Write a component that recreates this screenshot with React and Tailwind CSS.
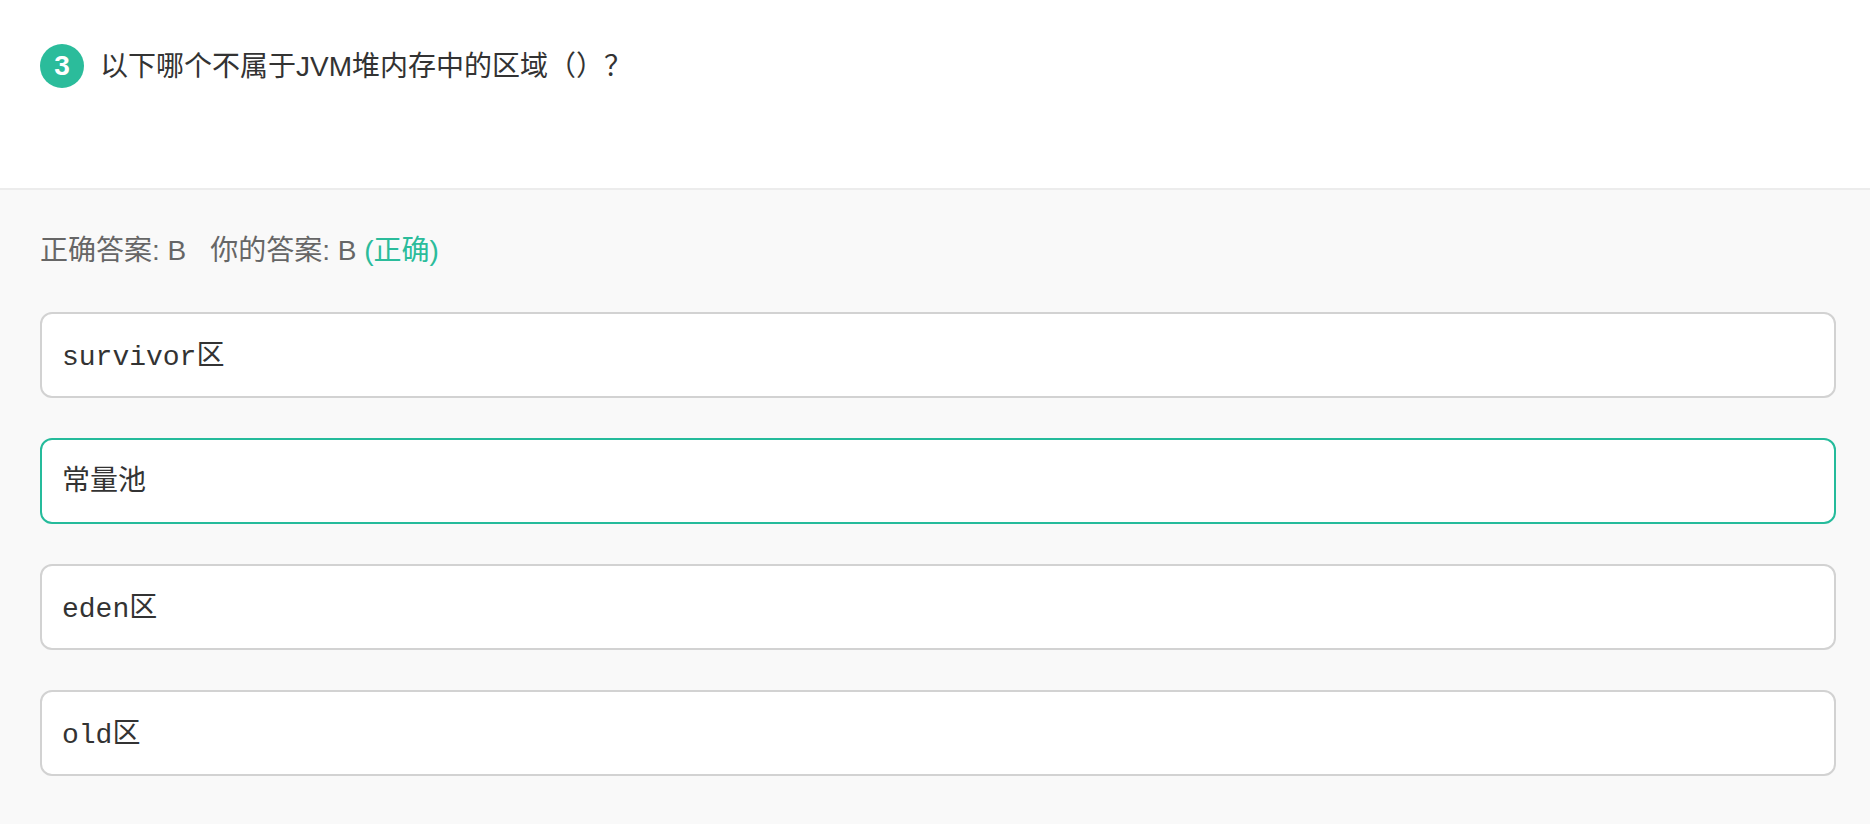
const sans = "font-['Liberation_Sans','Noto_Sans_CJK_SC',sans-serif]";

function Option({ children, mono, correct }) {
  return (
    <div
      className={`flex h-[86px] items-center rounded-xl border-2 bg-white pl-[20px] text-[28px] text-[#333] ${
        correct ? "border-[#25bb9b]" : "border-[#d2d2d2]"
      } ${mono ? "pt-[5px] font-['Liberation_Mono','Noto_Sans_CJK_SC',monospace]" : sans}`}
    >
      {children}
    </div>
  );
}

export default function App() {
  return (
    <div className={`flex h-[824px] flex-col bg-[#f9f9f9] ${sans}`}>
      <div className="flex h-[190px] items-start gap-[16px] border-b-2 border-[#ececec] bg-white pl-[40px] pt-[44px]">
        <div className="flex h-[44px] w-[44px] items-center justify-center rounded-full bg-[#2bbc9b] text-[28px] font-bold text-white">
          3
        </div>
        <div className="text-[28px] leading-[46px] text-[#333]">以下哪个不属于JVM堆内存中的区域（）？</div>
      </div>
      <div className="flex flex-col pl-[40px] pr-[34px] pt-[39px]">
        <div className="text-[28px] leading-[44px] text-[#666]">
          正确答案: B<span className="ml-[24px]">你的答案: B</span>{" "}
          <span className="text-[#2bbc9b]">(正确)</span>
        </div>
        <div className="mt-[39px] flex flex-col gap-[40px]">
          <Option mono>survivor区</Option>
          <Option correct>常量池</Option>
          <Option mono>eden区</Option>
          <Option mono>old区</Option>
        </div>
      </div>
    </div>
  );
}
